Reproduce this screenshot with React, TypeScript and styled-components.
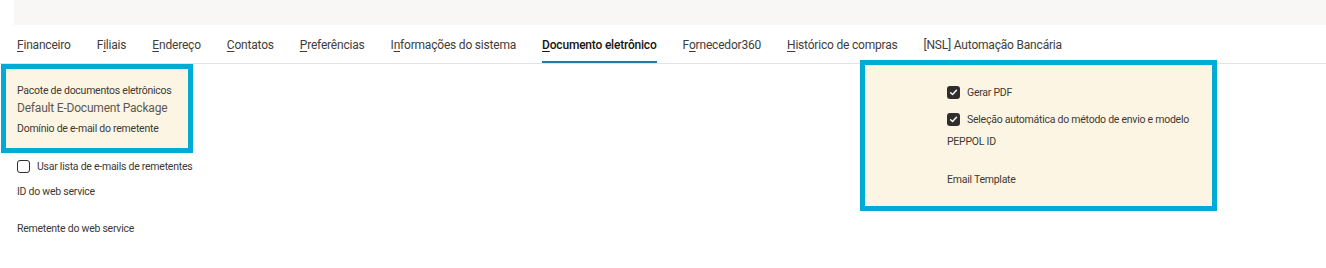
import React from "react";
import styled, { createGlobalStyle } from "styled-components";

const GlobalStyle = createGlobalStyle`
  body {
    margin: 0;
    background: #fff;
    font-family: Roboto, "Liberation Sans", sans-serif;
    color: #161513;
  }
`;

type Tab = { label: string; key?: number; active?: boolean };

const tabs: Tab[] = [
  { label: "Financeiro", key: 0 },
  { label: "Filiais", key: 1 },
  { label: "Endereço", key: 0 },
  { label: "Contatos", key: 0 },
  { label: "Preferências", key: 0 },
  { label: "Informações do sistema", key: 1 },
  { label: "Documento eletrônico", key: 0, active: true },
  { label: "Fornecedor360", key: 1 },
  { label: "Histórico de compras", key: 0 },
  { label: "[NSL] Automação Bancária" },
];

const TabLabel = ({ tab }: { tab: Tab }) => {
  if (tab.key === undefined) return <>{tab.label}</>;
  const i = tab.key;
  return (
    <>
      {tab.label.slice(0, i)}
      <u>{tab.label[i]}</u>
      {tab.label.slice(i + 1)}
    </>
  );
};

const Check = ({ checked }: { checked?: boolean }) => (
  <CheckBox checked={checked}>
    {checked && (
      <svg width="9" height="9" viewBox="0 0 10 10">
        <path d="M1.8 5.2 L4 7.3 L8.3 2.6" fill="none" stroke="#fff" strokeWidth="1.6" strokeLinecap="round" strokeLinejoin="round" />
      </svg>
    )}
  </CheckBox>
);

const App = () => {
  return (
    <>
      <GlobalStyle />
      <Page>
        <TopBar />
        <TabBar>
          {tabs.map((t) => (
            <TabItem key={t.label} active={t.active}>
              <TabLabel tab={t} />
            </TabItem>
          ))}
        </TabBar>
        <Content>
          <LeftCol>
            <HighlightLeft>
              <Label>Pacote de documentos eletrônicos</Label>
              <Value>Default E-Document Package</Value>
              <Label>Domínio de e-mail do remetente</Label>
            </HighlightLeft>
            <Fields>
              <CheckRow>
                <Check />
                <span>Usar lista de e-mails de remetentes</span>
              </CheckRow>
              <FieldLabel gapTop={12}>ID do web service</FieldLabel>
              <FieldLabel gapTop={23}>Remetente do web service</FieldLabel>
            </Fields>
          </LeftCol>
          <HighlightRight>
            <CheckRow>
              <Check checked />
              <span>Gerar PDF</span>
            </CheckRow>
            <CheckRow top={13}>
              <Check checked />
              <span>Seleção automática do método de envio e modelo</span>
            </CheckRow>
            <FieldLabel gapTop={9}>PEPPOL ID</FieldLabel>
            <FieldLabel gapTop={24}>Email Template</FieldLabel>
          </HighlightRight>
        </Content>
      </Page>
    </>
  );
};
export default App;

const Page = styled.div`
  width: 1326px;
  height: 268px;
  overflow: hidden;
`;
const TopBar = styled.div`
  margin-left: 14px;
  height: 25px;
  background: #f8f7f5;
`;
const TabBar = styled.div`
  display: flex;
  gap: 26px;
  height: 38px;
  padding-left: 17px;
  border-bottom: 1px solid #e4e3e1;
  font-size: 12px;
  letter-spacing: -0.2px;
`;
const TabItem = styled.div<{ active?: boolean }>`
  display: flex;
  align-items: center;
  padding-top: 1px;
  color: ${(p) => (p.active ? "#161513" : "#3f3d3a")};
  font-weight: ${(p) => (p.active ? 500 : 400)};
  box-shadow: ${(p) => (p.active ? "inset 0 -2px 0 #227e9e" : "none")};
  white-space: nowrap;
  u {
    text-decoration-thickness: 1px;
    text-underline-offset: 2px;
  }
`;
const Content = styled.div`
  display: flex;
  padding-left: 1px;
`;
const LeftCol = styled.div`
  width: 859px;
  display: flex;
  flex-direction: column;
`;
const HighlightLeft = styled.div`
  width: 171px;
  height: 64px;
  border: 5px solid #00acd1;
  background: #fdf5e3;
  padding: 15px 0 0 11px;
  display: flex;
  flex-direction: column;
`;
const Label = styled.div`
  font-size: 10.5px;
  letter-spacing: -0.25px;
  line-height: 14px;
  color: #3d3934;
  white-space: nowrap;
`;
const Value = styled.div`
  font-size: 12px;
  letter-spacing: -0.2px;
  line-height: 16px;
  margin: 2px 0 6px;
  color: #5b5955;
`;
const Fields = styled.div`
  padding: 6px 0 0 16px;
  display: flex;
  flex-direction: column;
`;
const CheckRow = styled.div<{ top?: number }>`
  display: flex;
  align-items: center;
  gap: 7px;
  height: 14px;
  margin-top: ${(p) => p.top ?? 0}px;
  font-size: 10.5px;
  letter-spacing: -0.25px;
  color: #3d3934;
  white-space: nowrap;
`;
const CheckBox = styled.span<{ checked?: boolean }>`
  width: 13px;
  height: 13px;
  box-sizing: border-box;
  border-radius: 3px;
  border: ${(p) => (p.checked ? "none" : "1.5px solid #312d2a")};
  background: ${(p) => (p.checked ? "#312d2a" : "#fff")};
  display: flex;
  align-items: center;
  justify-content: center;
  flex-shrink: 0;
`;
const FieldLabel = styled.div<{ gapTop?: number }>`
  font-size: 10.5px;
  letter-spacing: -0.25px;
  line-height: 14px;
  margin-top: ${(p) => p.gapTop ?? 11}px;
  color: #3d3934;
`;
const HighlightRight = styled.div`
  width: 265px;
  height: 121px;
  margin-top: -4px;
  border: 5px solid #00acd1;
  background: #fdf5e3;
  padding: 20px 0 0 82px;
  display: flex;
  flex-direction: column;
`;
